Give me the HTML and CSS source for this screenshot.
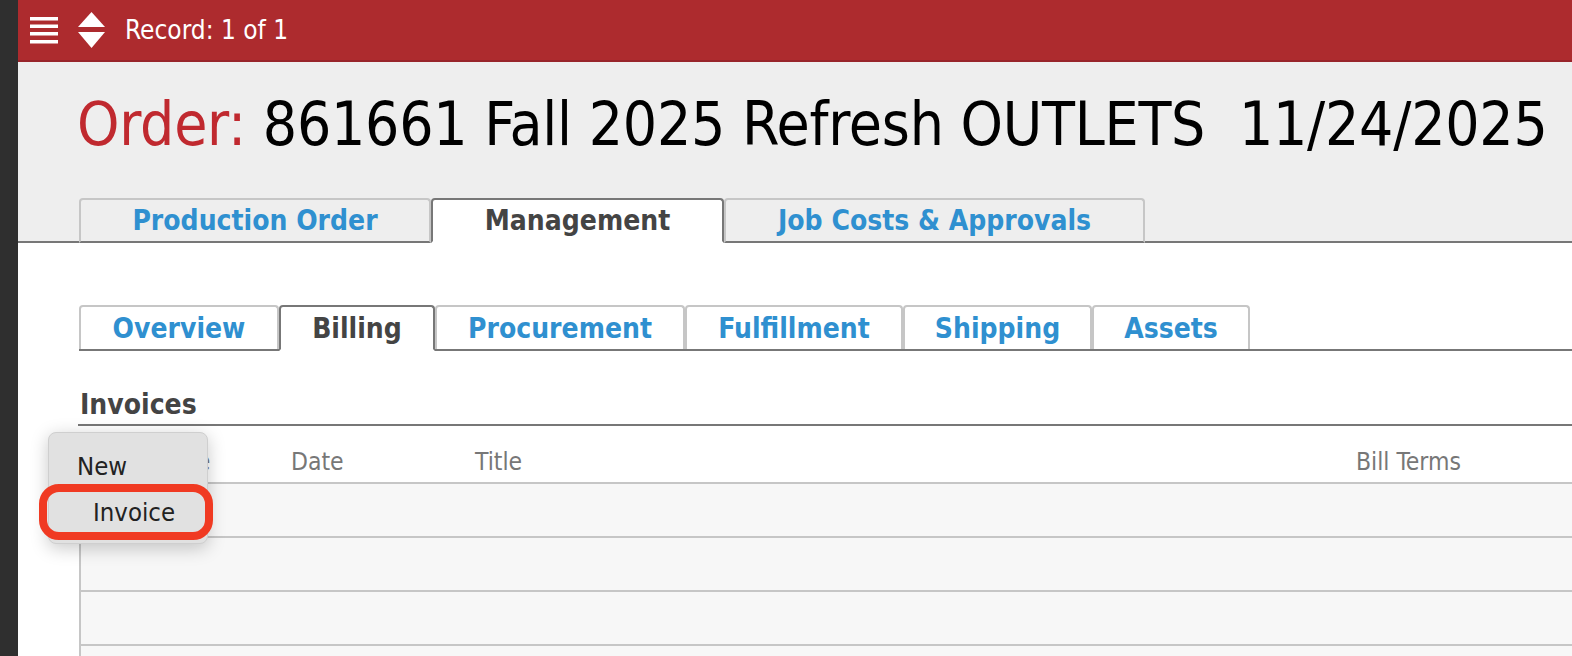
FILE: index.html
```html
<!DOCTYPE html>
<html>
<head>
<meta charset="utf-8">
<link rel="stylesheet" href="styles.css">
</head>
<body>
<div class="app">
  <aside class="rail"></aside>
  <div class="main">
    <header class="topbar">
      <svg class="icon-menu" width="28" height="28" viewBox="0 0 28 28">
        <rect x="0" y="1" width="28" height="3.5" fill="#fff"/>
        <rect x="0" y="8.5" width="28" height="3.5" fill="#fff"/>
        <rect x="0" y="16" width="28" height="3.5" fill="#fff"/>
        <rect x="0" y="24" width="28" height="3.5" fill="#fff"/>
      </svg>
      <svg class="icon-sort" width="27" height="37" viewBox="0 0 27 37">
        <polygon points="13.5,0 27,15 0,15" fill="#fff"/>
        <polygon points="0,20 27,20 13.5,36" fill="#fff"/>
      </svg>
      <span class="record">Record: 1 of 1</span>
    </header>
    <section class="head">
      <h1 class="title"><span class="label">Order:</span> 861661 Fall 2025 Refresh OUTLETS&nbsp; 11/24/2025</h1>
      <nav class="tabs">
        <div class="tab w-po">Production Order</div>
        <div class="tab active w-mg">Management</div>
        <div class="tab w-jc">Job Costs &amp; Approvals</div>
      </nav>
    </section>
    <section class="content">
      <nav class="subtabs">
        <div class="stab w-ov">Overview</div>
        <div class="stab active w-bi">Billing</div>
        <div class="stab w-pr">Procurement</div>
        <div class="stab w-fu">Fulfillment</div>
        <div class="stab w-sh">Shipping</div>
        <div class="stab w-as">Assets</div>
      </nav>
      <h2 class="section-title">Invoices</h2>
      <div class="table">
        <div class="thead">
          <div class="th c-type">Type</div>
          <div class="th c-date">Date</div>
          <div class="th c-title">Title</div>
          <div class="th c-terms">Bill Terms</div>
        </div>
        <div class="trow"></div>
        <div class="trow"></div>
        <div class="trow"></div>
        <div class="trow"></div>
      </div>
      <div class="popup">
        <div class="popup-label">New</div>
        <div class="popup-item">Invoice</div>
      </div>
      <div class="highlight"></div>
    </section>
  </div>
</div>
</body>
</html>
```
FILE: styles.css
```css
* { box-sizing: border-box; }
html, body { margin: 0; padding: 0; }
body {
  width: 1572px;
  height: 656px;
  overflow: hidden;
  font-family: "DejaVu Sans Condensed", "DejaVu Sans", sans-serif;
  background: #fff;
}
.app { display: flex; height: 656px; overflow: hidden; }
.rail { width: 18px; flex: none; background: #2f2f2f; }
.main { flex: 1; display: flex; flex-direction: column; position: relative; min-width: 0; }

.topbar {
  height: 62px;
  flex: none;
  background: #ad2b2e;
  border-bottom: 2px solid #98242a;
  display: flex;
  align-items: center;
  padding-left: 12px;
  color: #fff;
}
.icon-menu { margin-right: 20px; }
.icon-sort { margin-right: 20px; }
.record { font-size: 26px; }

.head {
  flex: none;
  background: #eeeeee;
  border-bottom: 2px solid #777;
  padding: 32px 0 0 61px;
}
.title {
  margin: 0 0 0 -2px;
  font-weight: normal;
  font-size: 60px;
  line-height: 60px;
  letter-spacing: -0.25px;
  color: #000;
  white-space: nowrap;
}
.title .label { color: #c0292f; }

.tabs { display: flex; margin-top: 44px; margin-bottom: -2px; }
.tab {
  height: 45px;
  border: 2px solid #c6c6c6;
  border-bottom: 2px solid #777;
  border-radius: 4px 4px 0 0;
  background: #eeeeee;
  color: #2f90d0;
  font-weight: bold;
  font-size: 28px;
  display: flex;
  align-items: center;
  justify-content: center;
}
.tab.active { background: #fff; border-color: #777; border-bottom-color: #fff; color: #444; }
.w-po { width: 352px; }
.w-mg { width: 293px; }
.w-jc { width: 421px; }

.content { position: relative; flex: 1; padding: 62px 0 0 61px; }
.subtabs { display: flex; border-bottom: 2px solid #777; }
.stab {
  height: 44px;
  border: 2px solid #c6c6c6;
  border-bottom: 0;
  border-radius: 4px 4px 0 0;
  background: #fff;
  color: #2f90d0;
  font-weight: bold;
  font-size: 28px;
  display: flex;
  align-items: center;
  justify-content: center;
  margin-bottom: -2px;
}
.stab.active { border-color: #777; color: #444; height: 46px; border-bottom: 2px solid #fff; }
.w-ov { width: 200px; }
.w-bi { width: 156px; }
.w-pr { width: 250px; }
.w-fu { width: 218px; }
.w-sh { width: 189px; }
.w-as { width: 158px; }

.section-title {
  margin: 37px 0 0 -1px;
  padding: 0 0 2px 2px;
  font-size: 28px;
  font-weight: bold;
  color: #444;
  line-height: 34px;
  border-bottom: 2px solid #777;
}

.thead {
  height: 58px;
  padding-top: 14px;
  display: flex;
  align-items: center;
  border-bottom: 2px solid #c6c6c6;
  color: #777;
  font-size: 24.5px;
}
.c-type { width: 212px; padding-left: 81px; }
.c-date { width: 184px; }
.c-title { width: 881px; }
.trow {
  height: 54px;
  background: #f7f7f7;
  border-left: 2px solid #c6c6c6;
  border-bottom: 2px solid #c6c6c6;
}

.popup {
  position: absolute;
  left: 30px;
  top: 189px;
  width: 160px;
  height: 112px;
  background: #e1e1e1;
  border: 1px solid #cfcfcf;
  border-radius: 8px;
  box-shadow: 0 4px 18px rgba(0,0,0,0.22);
  font-size: 25.5px;
  color: #222;
}
.popup-label { padding: 18px 0 0 28px; line-height: 30px; }
.popup-item { padding: 16px 0 0 44px; line-height: 30px; }
.highlight {
  position: absolute;
  left: 21px;
  top: 241px;
  width: 174px;
  height: 56px;
  border: 8px solid #f03a22;
  border-radius: 20px;
}
```
